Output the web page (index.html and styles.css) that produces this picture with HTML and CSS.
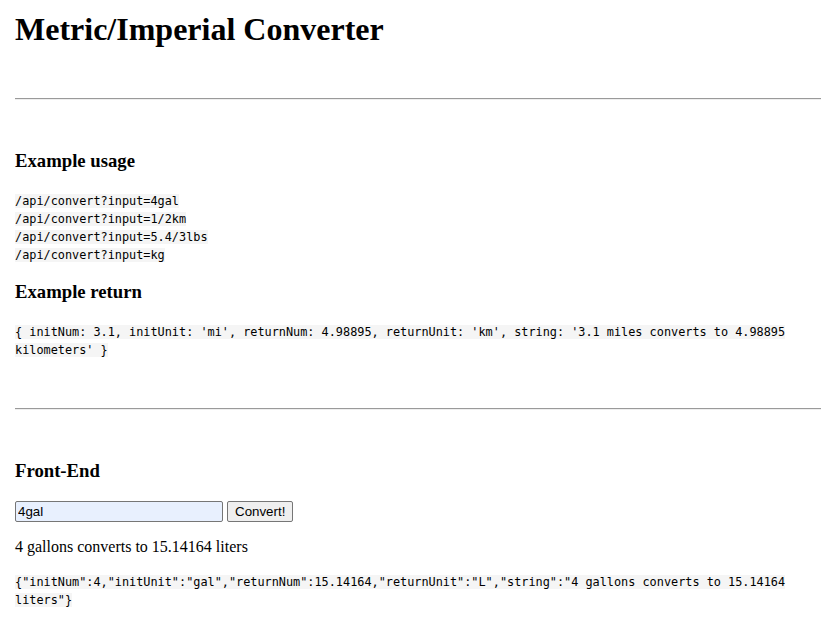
FILE: index.html
```html
<!DOCTYPE html>
<html>
<head>
<meta charset="utf-8">
<title>Metric/Imperial Converter</title>
<link rel="stylesheet" href="styles.css">
</head>
<body>
  <header>
    <h1 class="title">Metric/Imperial Converter</h1>
  </header>
  <hr class="divider">
  <section>
    <h3>Example usage</h3>
    <code>/api/convert?input=4gal</code><br>
    <code>/api/convert?input=1/2km</code><br>
    <code>/api/convert?input=5.4/3lbs</code><br>
    <code>/api/convert?input=kg</code><br>
    <h3>Example return</h3>
    <code>{ initNum: 3.1, initUnit: 'mi', returnNum: 4.98895, returnUnit: 'km', string: '3.1 miles converts to 4.98895 kilometers' }</code>
  </section>
  <hr class="divider">
  <div id="testui">
    <h3>Front-End</h3>
    <form id="convertForm" class="convert-form">
      <input type="text" id="convertField" class="field" name="input" value="4gal">
      <input id="convert" class="btn" type="submit" value="Convert!">
    </form>
    <p id="result" class="result">4 gallons converts to 15.14164 liters</p>
    <code id="jsonResult">{"initNum":4,"initUnit":"gal","returnNum":15.14164,"returnUnit":"L","string":"4 gallons converts to 15.14164 liters"}</code>
  </div>
</body>
</html>
```
FILE: styles.css
```css
body {
  margin: 0;
  padding: 11px 15px;
  font-family: "Liberation Serif", "Times New Roman", serif;
  font-size: 16px;
  color: #000;
  background: #fff;
}
.title {
  margin: 0;
  font-size: 32px;
  font-weight: bold;
}
h3 {
  font-size: 18.72px;
  margin: 18.72px 0;
}
.divider {
  margin: 50px 0;
  border: 0;
  border-top: 1px solid #9a9a9a;
  border-bottom: 1px solid #eeeeee;
  height: 0;
}
code {
  font-family: "DejaVu Sans Mono", monospace;
  font-size: 11.85px;
  background-color: #f5f5f5;
}
.convert-form {
  margin: 0;
  display: flex;
  gap: 4px;
  align-items: center;
}
.field {
  width: 202px;
  height: 17px;
  padding: 1px 2px;
  border: 1px solid #767676;
  border-radius: 2px;
  background: #e8f0fe;
  font-family: "Liberation Sans", Arial, sans-serif;
  font-size: 13.33px;
}
.btn {
  font-family: "Liberation Sans", Arial, sans-serif;
  font-size: 13.33px;
  padding: 1px 7px;
  height: 21px;
  border: 1px solid #767676;
  border-radius: 2px;
  background: #efefef;
  color: #000;
}
.result {
  margin: 16px 0;
}
```
